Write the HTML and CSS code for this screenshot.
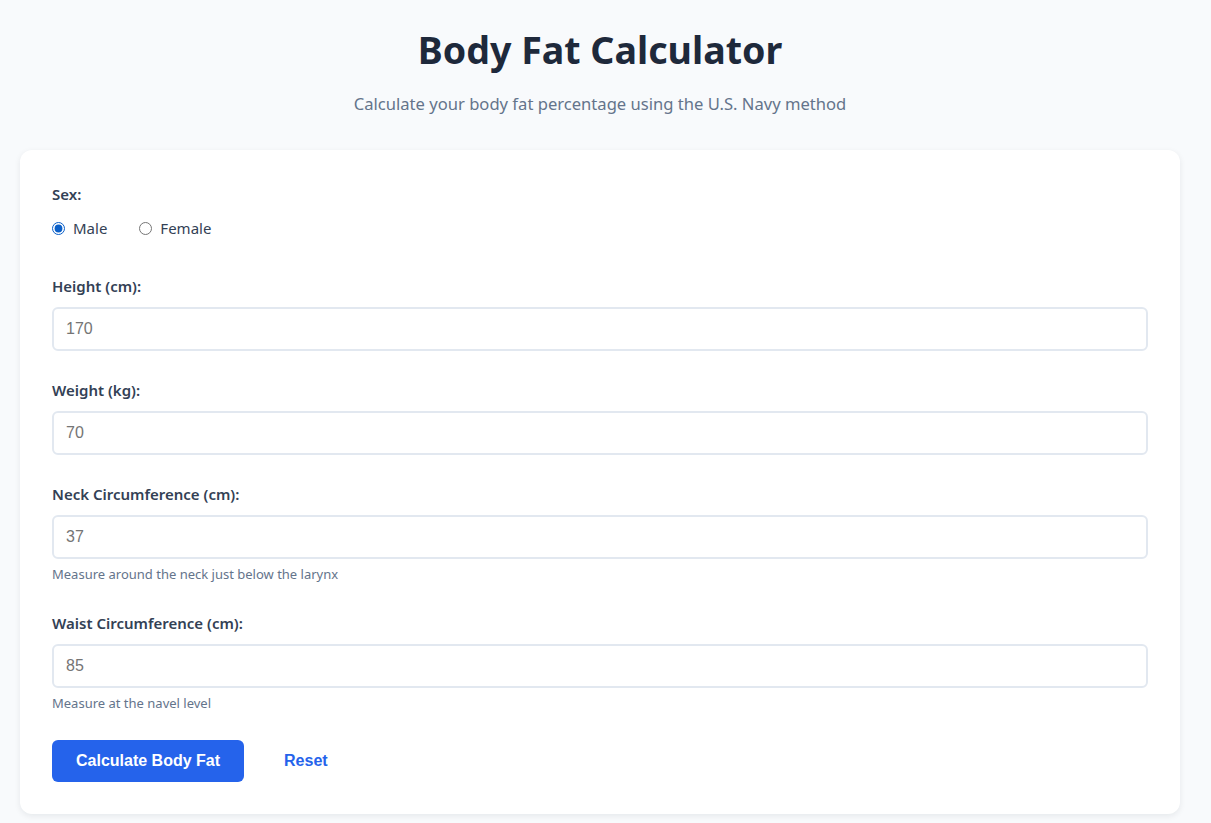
FILE: index.html
```html
<!DOCTYPE html>
<html lang="en">
<head>
<meta charset="utf-8">
<title>Body Fat Calculator</title>
<link rel="stylesheet" href="styles.css">
</head>
<body>
<div class="container">
  <header class="header">
    <h1 class="title">Body Fat Calculator</h1>
    <p class="subtitle">Calculate your body fat percentage using the U.S. Navy method</p>
  </header>
  <form class="card">
    <div class="group group-sex">
      <label class="label">Sex:</label>
      <div class="radios">
        <label class="radio"><input type="radio" name="sex" checked> <span>Male</span></label>
        <label class="radio"><input type="radio" name="sex"> <span>Female</span></label>
      </div>
    </div>
    <div class="group">
      <label class="label" for="h">Height (cm):</label>
      <input class="input" id="h" type="number" placeholder="170">
    </div>
    <div class="group">
      <label class="label" for="w">Weight (kg):</label>
      <input class="input" id="w" type="number" placeholder="70">
    </div>
    <div class="group">
      <label class="label" for="n">Neck Circumference (cm):</label>
      <input class="input" id="n" type="number" placeholder="37">
      <div class="help">Measure around the neck just below the larynx</div>
    </div>
    <div class="group">
      <label class="label" for="wa">Waist Circumference (cm):</label>
      <input class="input" id="wa" type="number" placeholder="85">
      <div class="help">Measure at the navel level</div>
    </div>
    <div class="actions">
      <button type="button" class="btn btn-primary">Calculate Body Fat</button>
      <button type="button" class="btn btn-link">Reset</button>
    </div>
  </form>
</div>
</body>
</html>
```

FILE: styles.css
```css
* { box-sizing: border-box; }
html, body { margin: 0; padding: 0; }
body {
  background: #f8fafc;
  font-family: "Noto Sans", "Open Sans", sans-serif;
  color: #1e293b;
}
.container {
  width: 1200px;
  padding: 25px 20px 20px;
}
.header { text-align: center; margin-bottom: 34px; }
.title {
  margin: 0;
  font-size: 37.6px;
  line-height: 50px;
  font-weight: 700;
  color: #1e293b;
}
.subtitle {
  margin: 17px 0 0;
  font-size: 16.6px;
  line-height: 24px;
  color: #64748b;
}
.card {
  background: #fff;
  border-radius: 12px;
  padding: 32px;
  box-shadow: 0 2px 6px rgba(15, 23, 42, 0.08);
}
.group { margin-bottom: 27px; }
.group-sex { margin-bottom: 32px; }
.label {
  display: block;
  font-size: 15px;
  line-height: 24px;
  font-weight: 600;
  color: #334155;
  margin-bottom: 9px;
}
.radios {
  display: flex;
  align-items: center;
  height: 28px;
  gap: 32px;
}
.group-sex .label { margin-bottom: 8px; }
.radio {
  display: flex;
  align-items: center;
  font-size: 15px;
  color: #334155;
}
.radio input {
  margin: 0 8px 0 0;
  width: 13px;
  height: 13px;
  accent-color: #0a5fc8;
}
.input {
  display: block;
  width: 100%;
  height: 44px;
  padding: 0 12px;
  border: 2px solid #e2e8f0;
  border-radius: 6px;
  font-family: "Liberation Sans", Arial, sans-serif;
  font-size: 16px;
  color: #1e293b;
  background: #fff;
  outline: none;
}
.input::placeholder { color: #757575; }
.input::-webkit-outer-spin-button,
.input::-webkit-inner-spin-button { -webkit-appearance: none; margin: 0; }
.help {
  margin-top: 6px;
  font-size: 13px;
  line-height: 19px;
  color: #64748b;
}
.actions { display: flex; gap: 16px; align-items: center; }
.btn {
  font-family: "Liberation Sans", Arial, sans-serif;
  font-size: 16px;
  font-weight: 700;
  line-height: 18px;
  padding: 12px 24px;
  border: 0;
  border-radius: 6px;
  cursor: pointer;
}
.btn-primary { background: #2563eb; color: #fff; }
.btn-link { background: transparent; color: #2563eb; }
```
